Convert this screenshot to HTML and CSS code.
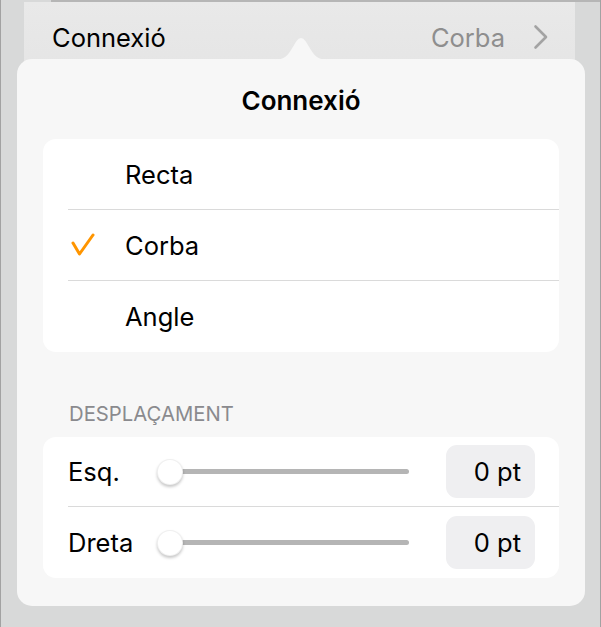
FILE: index.html
```html
<!DOCTYPE html>
<html>
<head>
<meta charset="utf-8">
<link rel="stylesheet" href="styles.css">
</head>
<body>
<div class="screen">
  <div class="topline"></div>
  <div class="cell">
    <div class="cell-row">
      <span class="cell-label">Connexió</span>
      <span class="cell-value">Corba</span>
      <svg class="chev" width="16" height="26" viewBox="0 0 16 26"><path d="M2.5 2.5 L13 13 L2.5 23.5" fill="none" stroke="#a3a3a3" stroke-width="2.6" stroke-linecap="round" stroke-linejoin="round"/></svg>
    </div>
  </div>

  <div class="popover">
    <svg class="arrow" width="60" height="23" viewBox="0 0 60 23"><path d="M0 23 C11 23 15 21 20 13 L25.5 4 Q30 -2 34.5 4 L40 13 C45 21 49 23 60 23 Z" fill="#f7f7f7"/></svg>
    <div class="title">Connexió</div>
    <div class="card">
      <div class="opt"><span class="check"></span><span class="opt-label">Recta</span></div>
      <div class="opt"><span class="check"><svg width="26" height="24" viewBox="0 0 26 24"><path d="M3 10 L9.5 21 L23 2" fill="none" stroke="#ff9500" stroke-width="3" stroke-linecap="round" stroke-linejoin="round"/></svg></span><span class="opt-label">Corba</span></div>
      <div class="opt"><span class="check"></span><span class="opt-label">Angle</span></div>
    </div>
    <div class="section">DESPLAÇAMENT</div>
    <div class="card">
      <div class="srow">
        <span class="slabel">Esq.</span>
        <div class="slider"><div class="track"></div><div class="thumb"></div></div>
        <div class="val">0 pt</div>
      </div>
      <div class="srow">
        <span class="slabel">Dreta</span>
        <div class="slider"><div class="track"></div><div class="thumb"></div></div>
        <div class="val">0 pt</div>
      </div>
    </div>
  </div>
</div>
</body>
</html>
```
FILE: styles.css
```css
* { box-sizing: border-box; }
html, body { margin: 0; padding: 0; }
body {
  font-family: "Inter", "Liberation Sans", sans-serif;
  color: #000;
}
.screen {
  position: relative;
  width: 601px;
  height: 627px;
  overflow: hidden;
  background: #d8d9d9;
  border-left: 1px solid #a2a2a2;
  border-right: 1px solid #a2a2a2;
}
.topline {
  height: 2px;
  margin-left: 50px;
  background: #b6b6b6;
}
.cell {
  margin: 0 25px 0 23px;
  height: 120px;
  background: linear-gradient(#e9e9e9, #e2e2e2);
}
.cell-row {
  height: 70px;
  display: flex;
  align-items: center;
  padding-left: 28px;
  padding-right: 26px;
  font-size: 25.5px;
}
.cell-label { flex: 1; }
.cell-value { color: #8e8e8e; margin-right: 28px; }
.chev { display: block; }

.popover {
  position: absolute;
  left: 16px;
  top: 59px;
  width: 568px;
  height: 547px;
  background: #f7f7f7;
  border-radius: 15px;
  padding: 0 26px;
}
.arrow {
  position: absolute;
  left: 254px;
  top: -22px;
}
.title {
  height: 80px;
  display: flex;
  align-items: center;
  justify-content: center;
  font-size: 26px;
  font-weight: 600;
  padding-top: 2px;
}
.card {
  background: #fff;
  border-radius: 13px;
  padding-left: 25px;
}
.opt {
  height: 71px;
  display: flex;
  align-items: center;
  border-bottom: 1px solid #dadada;
  font-size: 25.5px;
}
.opt:last-child { border-bottom: none; }
.check {
  width: 57px;
  display: flex;
  align-items: center;
  padding-left: 2px;
}
.check svg { display: block; }
.section {
  margin-top: 52px;
  height: 33px;
  padding-left: 26px;
  font-size: 20.3px;
  color: #8a8a8e;
  line-height: 20px;
}
.srow {
  height: 70px;
  display: flex;
  align-items: center;
  border-bottom: 1px solid #dadada;
  padding-right: 24px;
}
.srow:last-child { border-bottom: none; height: 71px; }
.slabel { width: 89px; font-size: 25.5px; }
.slider {
  position: relative;
  width: 254px;
  height: 28px;
  display: flex;
  align-items: center;
}
.track {
  margin-left: 14px;
  width: 238px;
  height: 5px;
  border-radius: 3px;
  background: #b5b5b5;
}
.thumb {
  position: absolute;
  left: 0;
  top: 1px;
  width: 26px;
  height: 26px;
  border-radius: 50%;
  background: #fff;
  border: 1px solid rgba(0,0,0,0.06);
  box-shadow: 0 2px 3px rgba(0,0,0,0.22);
}
.val {
  margin-left: auto;
  width: 89px;
  height: 53px;
  border-radius: 11px;
  background: #efeff1;
  display: flex;
  align-items: center;
  justify-content: flex-end;
  padding-right: 14px;
  font-size: 25.5px;
}
```
